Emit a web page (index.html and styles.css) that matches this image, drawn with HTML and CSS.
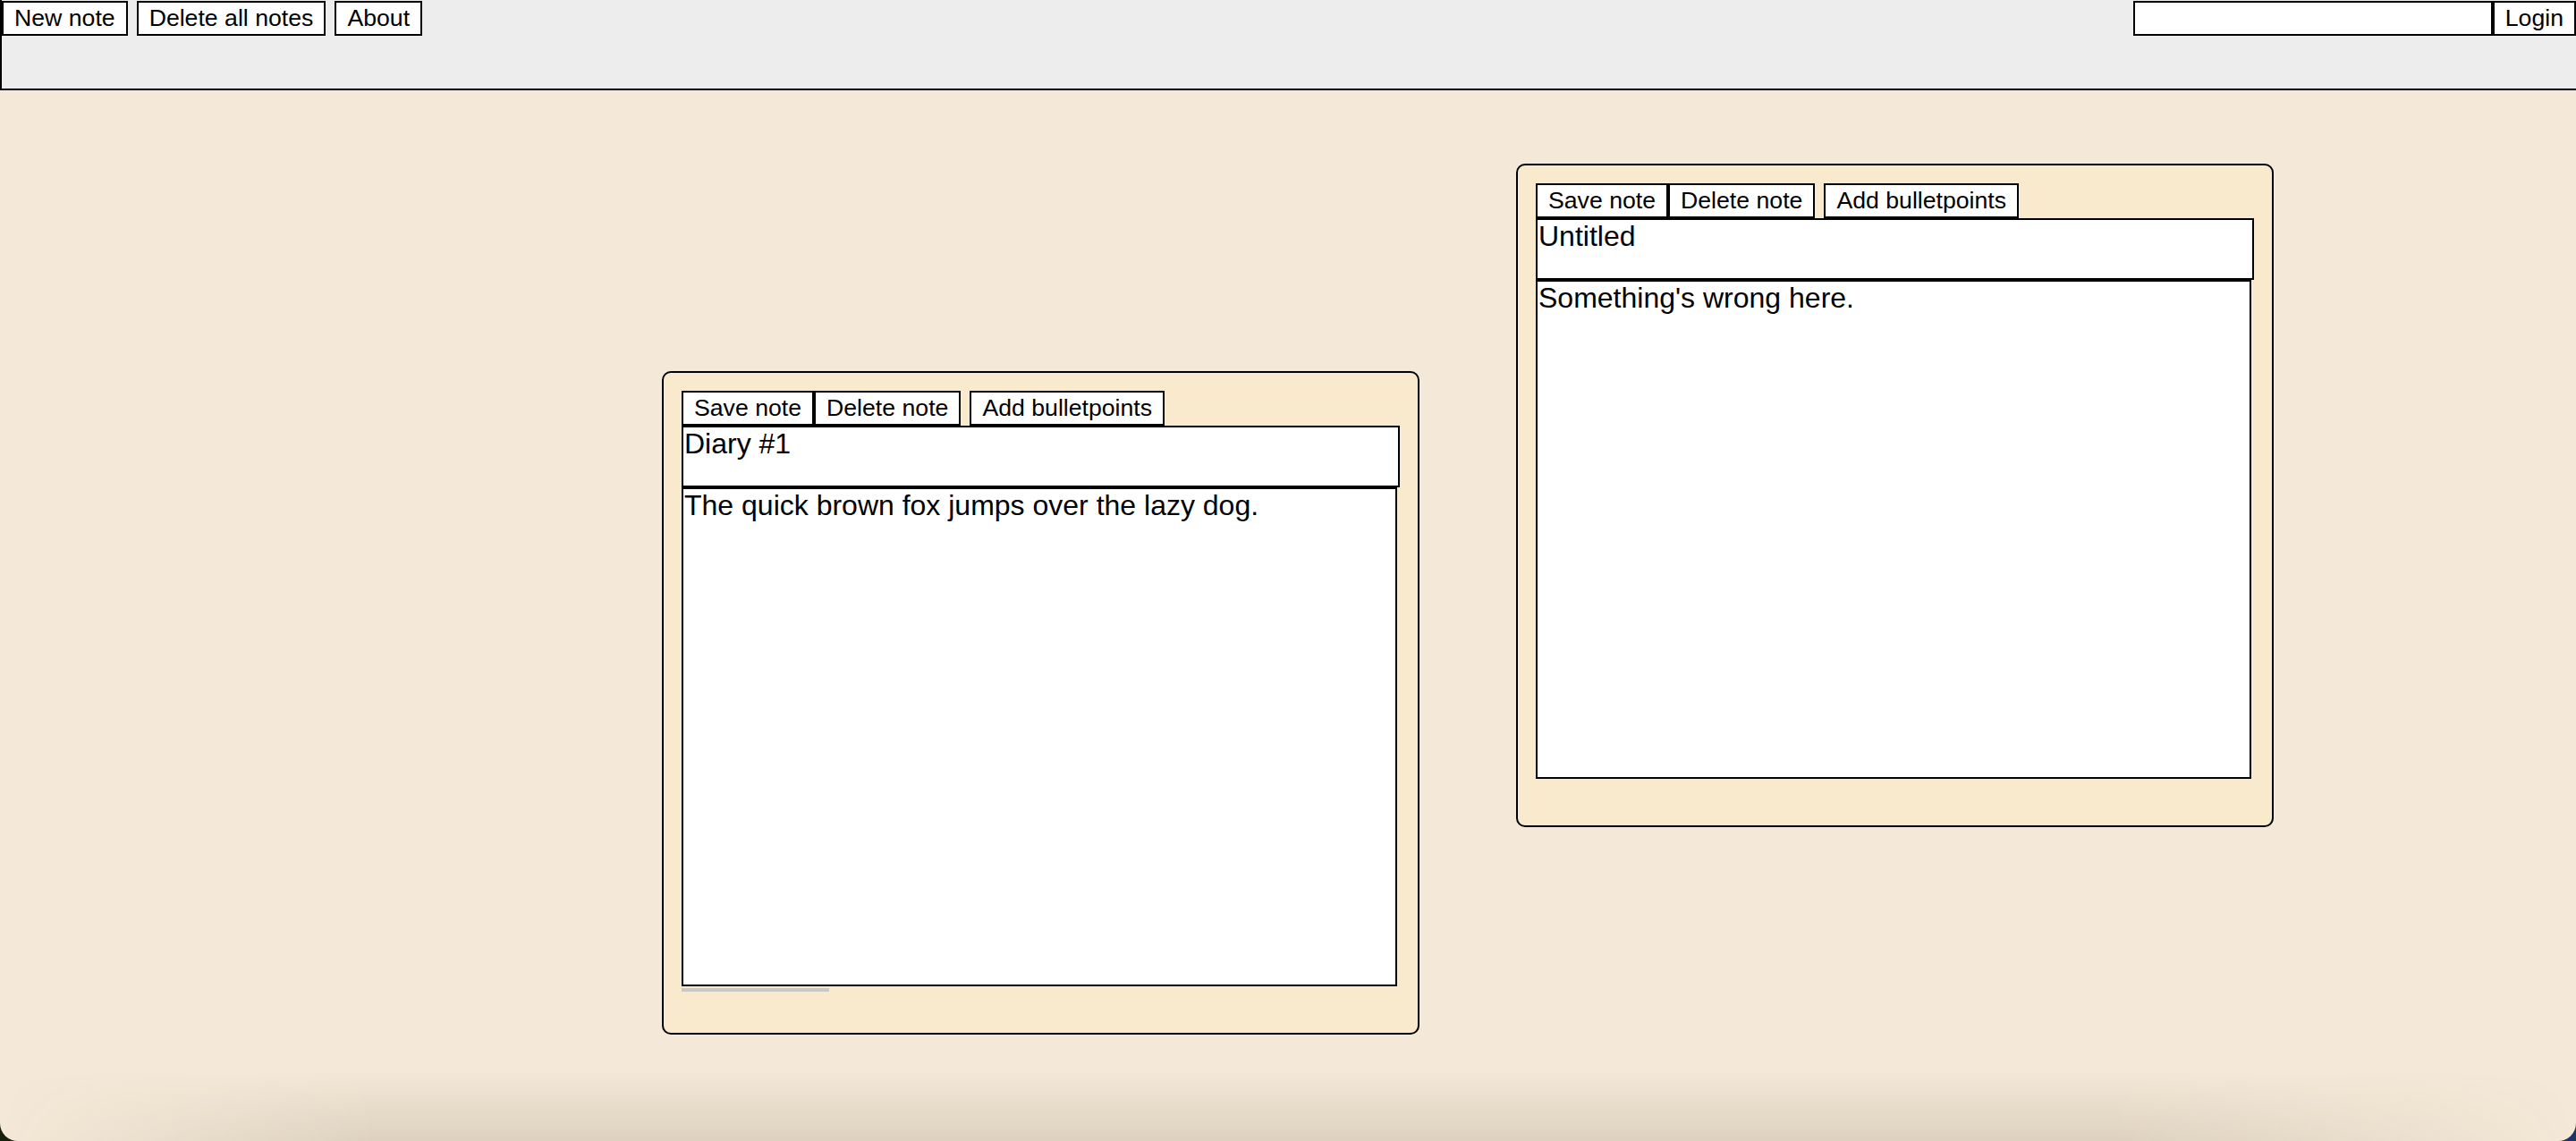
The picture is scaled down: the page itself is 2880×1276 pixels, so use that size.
FILE: index.html
```html
<!DOCTYPE html>
<html lang="en">
<head>
<meta charset="utf-8">
<title>Notes</title>
<link rel="stylesheet" href="styles.css">
</head>
<body>
<div class="app">
  <header class="toolbar">
    <div class="toolbar-left">
      <button class="btn">New note</button>
      <button class="btn btn-spaced">Delete all notes</button>
      <button class="btn btn-spaced">About</button>
    </div>
    <div class="toolbar-right">
      <div class="login-input"></div>
      <button class="btn">Login</button>
    </div>
  </header>
  <main class="canvas">
    <section class="note note-diary">
      <div class="note-actions"><button class="btn">Save note</button><button class="btn">Delete note</button><button class="btn btn-spaced">Add bulletpoints</button></div>
      <div class="note-title">Diary #1</div>
      <div class="note-body">The quick brown fox jumps over the lazy dog.</div>
      <div class="note-bar"></div>
    </section>
    <section class="note note-untitled">
      <div class="note-actions"><button class="btn">Save note</button><button class="btn">Delete note</button><button class="btn btn-spaced">Add bulletpoints</button></div>
      <div class="note-title">Untitled</div>
      <div class="note-body">Something's wrong here.</div>
    </section>
  </main>
</div>
</body>
</html>
```

FILE: styles.css
```css
html {
  background: linear-gradient(to right, #17200f, #1d3565);
}
body {
  margin: 0;
  font-family: "Liberation Sans", Arial, sans-serif;
  color: #000;
}
.app {
  position: relative;
  width: 2880px;
  height: 1276px;
  background: #f4e9d8;
  overflow: hidden;
  border-radius: 0 0 20px 20px;
  display: flex;
  flex-direction: column;
}
.app::after {
  content: "";
  position: absolute;
  left: 0;
  right: 0;
  bottom: 0;
  height: 80px;
  pointer-events: none;
  background: linear-gradient(to bottom, rgba(70, 50, 20, 0), rgba(70, 50, 20, 0.13));
  -webkit-mask-image: linear-gradient(to right, transparent 0, #000 420px, #000 calc(100% - 520px), transparent 100%);
  mask-image: linear-gradient(to right, transparent 0, #000 420px, #000 calc(100% - 520px), transparent 100%);
}
.toolbar {
  box-sizing: border-box;
  height: 101px;
  flex: none;
  background: #ededed;
  border-left: 2px solid #000;
  border-bottom: 2px solid #000;
  padding-top: 1px;
  display: flex;
  justify-content: space-between;
  align-items: flex-start;
}
.toolbar-left,
.toolbar-right {
  display: flex;
  align-items: flex-start;
}
.btn {
  box-sizing: border-box;
  height: 39px;
  margin: 0;
  padding: 0 12px;
  border: 2px solid #000;
  border-radius: 0;
  background: #fff;
  color: #000;
  font-family: "Liberation Sans", Arial, sans-serif;
  font-size: 26.67px;
  line-height: 35px;
  white-space: nowrap;
}
.btn-spaced {
  margin-left: 10px;
}
.login-input {
  box-sizing: border-box;
  width: 402px;
  height: 39px;
  border: 2px solid #000;
  background: #fff;
}
.canvas {
  position: relative;
  flex: 1;
}
.note {
  position: absolute;
  box-sizing: border-box;
  width: 847px;
  height: 742px;
  padding: 20px;
  border: 2px solid #000;
  border-radius: 10px;
  background: #f9e9cd;
}
.note-diary {
  left: 740px;
  top: 314px;
}
.note-untitled {
  left: 1695px;
  top: 82px;
}
.note-actions {
  display: flex;
  align-items: flex-start;
  height: 39px;
}
.note-title {
  box-sizing: border-box;
  width: 100%;
  height: 69px;
  border: 2px solid #000;
  background: #fff;
  padding: 0 1px;
  font-size: 32px;
  line-height: 36px;
}
.note-body {
  box-sizing: border-box;
  width: 800px;
  height: 558px;
  border: 2px solid #000;
  background: #fff;
  padding: 0 1px;
  font-size: 32px;
  line-height: 36px;
}
.note-bar {
  width: 165px;
  height: 4px;
  margin-top: 2px;
  background: #c8c8c8;
}
```
